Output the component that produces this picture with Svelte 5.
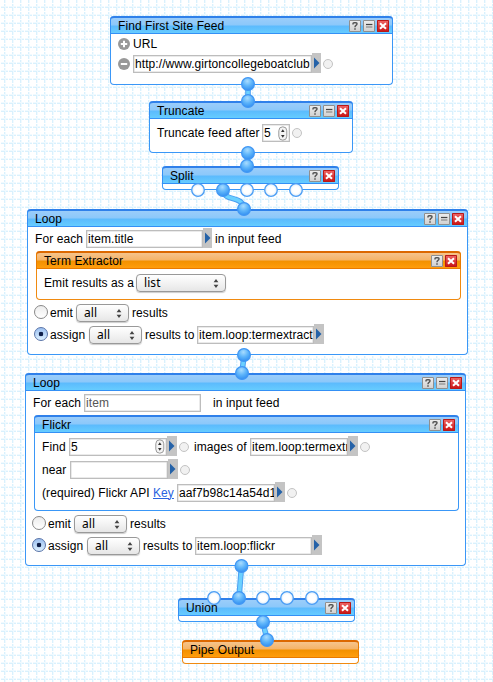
<script>
  const wires = [
    'M248 84 L248 101',
    'M248 153 L247 166',
    'M223 190 C225 203 242 194 244 209',
    'M244 355 L242 373',
    'M241.5 566 L239 598',
    'M263 622 L267 640'
  ];
  const used = [
    [248, 84], [248, 101], [248, 153], [247, 166], [223, 190], [244, 209],
    [244, 355], [242, 373], [241.5, 566], [239, 598], [263, 622], [267, 640]
  ];
  const free = [
    [198, 190], [247, 190], [271, 190], [296, 190],
    [214, 598], [263, 598], [287, 598], [312, 598]
  ];
</script>

{#snippet head(title, buttons)}
  <header>
    <span class="title">{title}</span>
    {#each buttons as b}
      <button class="btn" class:close={b === 'x'} aria-label={b}>
        <svg width="12" height="12" viewBox="0 0 12 12">
          {#if b === '?'}
            <path d="M4 4.6 V3.8 Q4 2.7 5 2.7 H7 Q8 2.7 8 3.8 Q8 4.8 7 5.3 Q6 5.8 6 7.2 M6 8.3 V9.8" fill="none" stroke="#555" stroke-width="1.5" />
          {:else if b === '-'}
            <path d="M3 4.5 H9.4" stroke="#444" stroke-width="1.2" />
            <path d="M3 7 H9.4" stroke="#a5a5a5" stroke-width="1.8" />
          {:else}
            <path d="M3 3.3 L9 8.7 M9 3.3 L3 8.7" stroke="#fff" stroke-width="2.1" />
          {/if}
        </svg>
      </button>
    {/each}
  </header>
{/snippet}

{#snippet label(text, width)}
  <span class="label" style:width="{width}px">{text}</span>
{/snippet}

{#snippet field(text, width, arrow, spin)}
  <span class="field" style:width="{width}px">
    <span class="value">{text}</span>
    {#if spin}
      <svg class="spin" width="10" height="15" viewBox="0 0 10 15">
        <rect x="0.8" y="0.8" width="8" height="13.4" rx="4" fill="#f4f4f4" stroke="#999" />
        <path d="M4.8 3.2 L6.6 6 H3 Z M4.8 11.8 L6.6 9 H3 Z" fill="#333" />
      </svg>
    {/if}
  </span>
  {#if arrow}
    <svg class="arrow" width={arrow} height="20" viewBox="0 0 {arrow} 20">
      <rect width={arrow} height="20" fill="#c4c4c4" />
      <path d="M2 4.5 L7.5 10 L2 15.5 Z" fill="#2562a8" />
    </svg>
  {/if}
{/snippet}

{#snippet pin()}
  <span class="pin"></span>
{/snippet}

{#snippet pick(text, width)}
  <span class="select" style:width="{width}px">
    <span>{text}</span>
    <svg width="6" height="9" viewBox="0 0 6 9"><path d="M3 0 L5.4 3.3 H0.6 Z M3 9 L5.4 5.7 H0.6 Z" fill="#444" /></svg>
  </span>
{/snippet}

{#snippet outputs(target, width)}
  <div class="row out">
    <span class="radio"></span>
    {@render label('emit', 26)}
    {@render pick('all', 53)}
    <span class="label after">results</span>
  </div>
  <div class="row out">
    <span class="radio on"></span>
    {@render label('assign', 39)}
    {@render pick('all', 53)}
    <span class="label after assigned">results to</span>
    {@render field(target, width, 10, false)}
  </div>
{/snippet}

<main class="canvas">
  <section class="module find">
    {@render head('Find First Site Feed', ['?', '-', 'x'])}
    <div class="row">
      <svg class="round" width="12" height="12" viewBox="0 0 12 12"><circle cx="6" cy="6" r="6" fill="#999" /><path d="M6 2.8 V9.2 M2.8 6 H9.2" stroke="#fff" stroke-width="2" /></svg>
      {@render label('URL', 40)}
    </div>
    <div class="row">
      <svg class="round" width="12" height="12" viewBox="0 0 12 12"><circle cx="6" cy="6" r="6" fill="#999" /><path d="M2.8 6 H9.2" stroke="#fff" stroke-width="2" /></svg>
      {@render field('http://www.girtoncollegeboatclub', 179, 9, false)}
      {@render pin()}
    </div>
  </section>

  <section class="module truncate">
    {@render head('Truncate', ['?', '-', 'x'])}
    <div class="row limit">
      {@render label('Truncate feed after', 105)}
      {@render field('5', 28, 0, true)}
      {@render pin()}
    </div>
  </section>

  <section class="module split">
    {@render head('Split', ['?', 'x'])}
  </section>

  <section class="module loop first">
    {@render head('Loop', ['?', '-', 'x'])}
    <div class="row each">
      {@render label('For each', 51)}
      {@render field('item.title', 117, 9, false)}
      <span class="label after">in input feed</span>
    </div>
    <section class="module inner orange extractor">
      {@render head('Term Extractor', ['?', 'x'])}
      <div class="row emitas">
        {@render label('Emit results as a', 92)}
        {@render pick('list', 90)}
      </div>
    </section>
    {@render outputs('item.loop:termextract', 117)}
  </section>

  <section class="module loop second">
    {@render head('Loop', ['?', '-', 'x'])}
    <div class="row each">
      {@render label('For each', 51)}
      <span class="muted">{@render field('item', 117, 0, false)}</span>
      <span class="label far">in input feed</span>
    </div>
    <section class="module inner flickr">
      {@render head('Flickr', ['?', 'x'])}
      <div class="row">
        {@render label('Find', 27)}
        {@render field('5', 98, 10, true)}
        {@render pin()}
        <span class="label images">images of</span>
        {@render field('item.loop:termextract', 98, 10, false)}
        {@render pin()}
      </div>
      <div class="row">
        {@render label('near', 28)}
        {@render field('', 98, 10, false)}
        {@render pin()}
      </div>
      <div class="row">
        {@render label('(required) Flickr API', 111)}
        <span class="label key"><a href="#key">Key</a></span>
        {@render field('aaf7b98c14a54d1', 98, 10, false)}
        {@render pin()}
      </div>
    </section>
    {@render outputs('item.loop:flickr', 117)}
  </section>

  <section class="module union">
    {@render head('Union', ['?', 'x'])}
  </section>

  <section class="module orange output">
    {@render head('Pipe Output', [])}
  </section>

  <svg class="wires" width="493" height="682" viewBox="0 0 493 682">
    <defs>
      <radialGradient id="ball" cx="45%" cy="28%" r="75%">
        <stop offset="0" stop-color="#a8dcff" />
        <stop offset="0.5" stop-color="#5db4fa" />
        <stop offset="1" stop-color="#2f8cf0" />
      </radialGradient>
      <radialGradient id="hole">
        <stop offset="0.55" stop-color="#fff" />
        <stop offset="1" stop-color="#dbeaf8" />
      </radialGradient>
    </defs>
    {#each wires as d}
      <path {d} fill="none" stroke="#4a9ff2" stroke-width="5.6" />
      <path {d} fill="none" stroke="#6bd0ff" stroke-width="3.6" />
    {/each}
    {#each free as [x, y]}
      <circle cx={x} cy={y} r="6.3" fill="url(#hole)" stroke="#4a9df5" stroke-width="1.3" />
    {/each}
    {#each used as [x, y]}
      <circle cx={x} cy={y} r="6.4" fill="url(#ball)" stroke="#4197f4" stroke-width="1.2" />
    {/each}
  </svg>
</main>

<style>
  .canvas {
    position: relative;
    width: 493px;
    height: 682px;
    overflow: hidden;
    font: 12px/14px 'Liberation Sans', Arial, sans-serif;
    letter-spacing: 0.08px;
    color: #000;
    background: url("data:image/svg+xml,%3Csvg xmlns='http://www.w3.org/2000/svg' width='8' height='8'%3E%3Cpath d='M1 4.5H8' stroke='%23d9f1fd'/%3E%3Cpath d='M4.5 1V8' stroke='%23d9f1fd'/%3E%3Cpath d='M5.5 1V8M1 3.5H8' stroke='%23f0faff'/%3E%3C/svg%3E") 0 3px #fff;
  }
  .module {
    position: absolute;
    box-sizing: border-box;
    border: 1px solid #3a97f7;
    border-top: 0;
    border-radius: 4px;
    background: #fff;
  }
  .find { left: 110px; top: 16px; width: 283px; height: 69px; }
  .truncate { left: 149px; top: 101px; width: 204px; height: 52px; }
  .split { left: 162px; top: 166px; width: 177px; height: 24px; }
  .first { left: 27px; top: 209px; width: 441px; height: 146px; }
  .second { left: 25px; top: 373px; width: 441px; height: 193px; }
  .union { left: 178px; top: 598px; width: 177px; height: 24px; }
  .output { left: 182px; top: 640px; width: 177px; height: 24px; }
  .inner { position: static; margin: 0 6px 2px 8px; }
  .extractor { height: 49px; }
  .flickr { height: 96px; }
  .orange { border-color: #f08a10; }

  header {
    box-sizing: border-box;
    display: flex;
    align-items: center;
    gap: 2px;
    height: 18px;
    margin: 0 -1px;
    padding: 1px 4px 0 8px;
    border: 1px solid #3490f5;
    border-top: 2px solid #2f80ea;
    border-radius: 4px 4px 0 0;
    background: linear-gradient(#9bcdfa, #8cc8fa 45%, #5cbbfd 55%, #66ccff);
  }
  .orange header {
    border-color: #e87a00;
    border-top-color: #dc6800;
    background: linear-gradient(#f6c48c, #f5b469 45%, #f39100 55%, #ff9d0c);
  }
  .title { flex: 1; margin-left: -1px; white-space: nowrap; }
  .btn {
    box-sizing: border-box;
    width: 12px;
    height: 12px;
    padding: 0;
    margin-top: -1px;
    border: 0;
    border-radius: 1px;
    background: linear-gradient(#efefef, #cfcfcf);
    box-shadow: inset 0 0 0 1px #8f8f8f;
  }
  .btn:last-child { margin-right: -1px; }
  .btn svg { display: block; }
  .close { background: linear-gradient(#f06a6a, #c81010); box-shadow: inset 0 0 0 1px #b81818; }

  .row { display: flex; align-items: center; height: 20px; padding-left: 7px; }
  .round { margin-right: 3px; }
  .limit { height: 28px; }
  .each { height: 24px; }
  .extractor .row { height: 26px; margin-top: 1px; }
  .flickr .row { height: 23px; }
  .flickr header { margin-bottom: 2px; }
  .out { height: 22px; padding-left: 6px; }
  .label { flex: none; white-space: nowrap; }
  .after { margin-left: 3px; }
  .assigned { width: 52px; }
  .far { margin-left: 12px; }
  .images { margin-left: 5px; width: 56px; }
  .key { width: 24px; }
  a { color: #2a62e0; }
  .field {
    box-sizing: border-box;
    flex: none;
    display: flex;
    align-items: center;
    height: 18px;
    padding: 0 0 0 1px;
    border: 1px solid #bdbdbd;
    box-shadow: inset 0 0 0 0.5px #d5d5d5;
    background: #fff;
  }
  .value { flex: 1; overflow: hidden; white-space: nowrap; }
  .muted { color: #555; }
  .spin { flex: none; margin-right: 1px; }
  .arrow { flex: none; margin-bottom: 2px; }
  .pin {
    box-sizing: border-box;
    flex: none;
    width: 10px;
    height: 10px;
    margin-left: 2px;
    border: 1.5px solid #c3c3c3;
    border-radius: 50%;
    background: #f1f1f1;
  }
  .select {
    box-sizing: border-box;
    flex: none;
    display: flex;
    align-items: center;
    justify-content: space-between;
    height: 18px;
    padding: 0 6px 0 7px;
    border: 1px solid #999;
    border-radius: 4px;
    background: linear-gradient(#fff, #f3f3f3 50%, #e6e6e6);
    box-shadow: 0 1px 1px #ccc;
    font: 12px/16px 'Noto Sans', sans-serif;
  }
  .radio {
    box-sizing: border-box;
    flex: none;
    width: 14px;
    height: 14px;
    margin: 0 2px 2px 0;
    border: 1px solid #888;
    border-radius: 50%;
    background: linear-gradient(#ececec, #fff);
  }
  .on {
    border-color: #5a74a8;
    background: radial-gradient(circle, #10204a 0 2px, transparent 2.6px), linear-gradient(#9cc0f0, #dcf0ff);
  }
  .wires { position: absolute; left: 0; top: 0; pointer-events: none; }
</style>
